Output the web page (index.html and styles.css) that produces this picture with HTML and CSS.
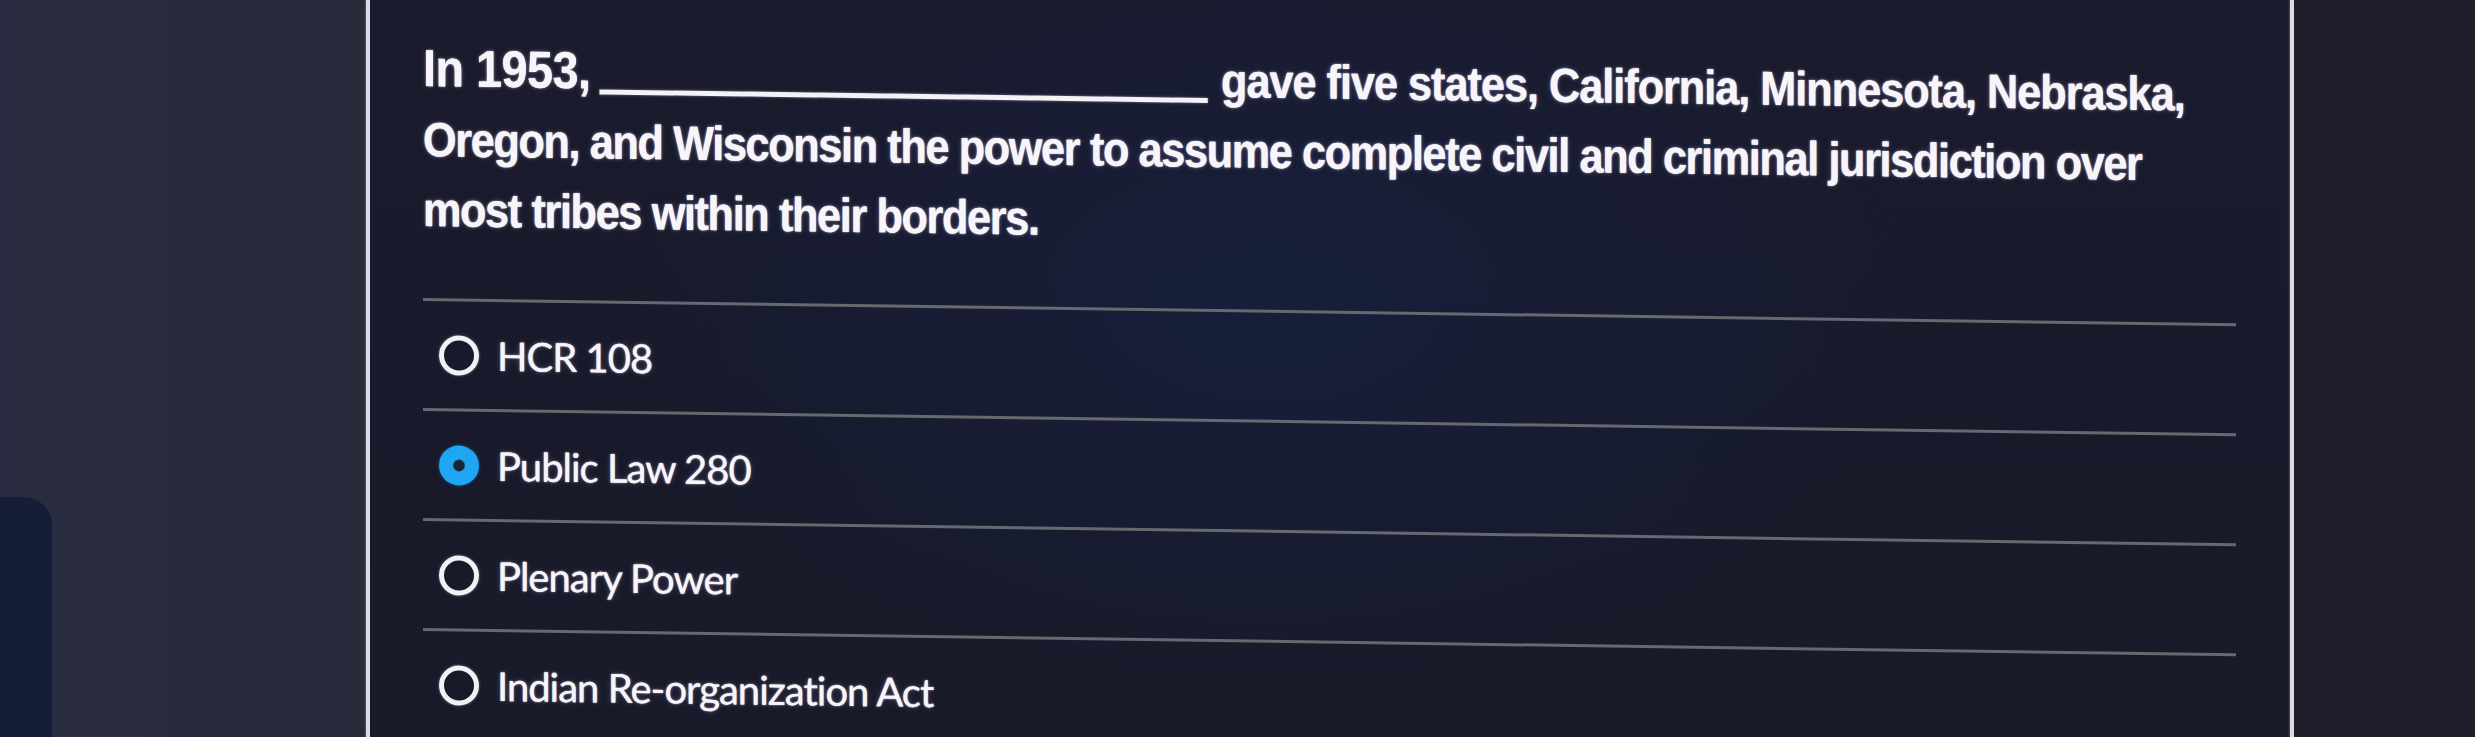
FILE: index.html
```html
<!DOCTYPE html>
<html lang="en">
<head>
<meta charset="utf-8">
<title>Quiz question</title>
<link rel="stylesheet" href="styles.css">
</head>
<body>
<div class="screen">
  <aside class="side-left">
    <div class="side-tab"></div>
  </aside>
  <div class="divider"></div>
  <main class="panel">
    <div class="quiz">
      <p class="question"><span class="lead">In 1953,</span> <span class="blank"></span> <span class="loose">gave five states, California, Minnesota, Nebraska,</span><br>Oregon, and Wisconsin the power to assume complete civil and criminal jurisdiction over<br>most tribes within their borders.</p>
      <ul class="options">
        <li class="option"><span class="radio"></span><span class="label">HCR 108</span></li>
        <li class="option"><span class="radio checked"></span><span class="label">Public Law 280</span></li>
        <li class="option"><span class="radio"></span><span class="label">Plenary Power</span></li>
        <li class="option"><span class="radio"></span><span class="label">Indian Re-organization Act</span></li>
      </ul>
    </div>
  </main>
  <div class="divider"></div>
  <aside class="side-right"></aside>
</div>
</body>
</html>
```

FILE: styles.css
```css
html, body {
  margin: 0;
  padding: 0;
  background: #1c1c28;
}

.screen {
  display: flex;
  width: 2475px;
  height: 737px;
  overflow: hidden;
}

.side-left {
  width: 366px;
  flex: none;
  display: flex;
  flex-direction: column;
  justify-content: flex-end;
  background: linear-gradient(90deg, #2a2d41 0px, #2a2d40 120px, #27293b 200px, #28293a 366px);
}

.side-tab {
  width: 52px;
  height: 240px;
  background: #161e37;
  border-top-right-radius: 28px;
}

.divider {
  width: 4px;
  flex: none;
  background: #dcdce4;
  box-shadow: 0 0 3px rgba(220, 220, 240, 0.5);
}

.panel {
  width: 1920px;
  flex: none;
  box-sizing: border-box;
  padding: 35px 0 0 53px;
  background:
    radial-gradient(ellipse 650px 400px at 900px 300px, rgba(22, 32, 64, 0.75), rgba(22, 32, 64, 0) 100%),
    linear-gradient(180deg, #1a1b2c 0%, #181a2b 60%, #191a29 100%);
}

.side-right {
  flex: 1;
  background: #1f1e2b;
}

.quiz {
  width: 1813px;
  transform: skewY(0.8deg);
  transform-origin: 0 0;
}

.question {
  margin: 0 0 53px 0;
  font-family: "Liberation Sans", Arial, sans-serif;
  font-weight: 700;
  font-size: 48px;
  line-height: 70px;
  letter-spacing: -1.5px;
  white-space: nowrap;
  color: #f7f5f9;
  transform: scaleX(0.9);
  transform-origin: 0 0;
  text-shadow: 0 0 1px rgba(255, 255, 255, 0.9), 0 0 3px rgba(255, 255, 255, 0.4), 0 0 7px rgba(180, 170, 255, 0.2);
}

.lead {
  font-size: 52px;
  line-height: 50px;
  letter-spacing: -0.6px;
}

.loose {
  letter-spacing: -1.1px;
}

.blank {
  display: inline-block;
  width: 676px;
  height: 0;
  margin: 0 3px -6px -2px;
  border-bottom: 5px solid #f4f2f6;
  box-shadow: 0 0 3px rgba(255, 255, 255, 0.4);
}

.options {
  list-style: none;
  margin: 0;
  padding: 0;
}

.option {
  display: flex;
  align-items: center;
  gap: 18px;
  height: 107px;
  padding-left: 16px;
  border-top: 3px solid #67696f;
}

.radio {
  width: 40px;
  height: 40px;
  flex: none;
  box-sizing: border-box;
  border-radius: 50%;
  border: 5px solid #f2f2f6;
  box-shadow: 0 0 3px rgba(255, 255, 255, 0.4);
}

.radio.checked {
  border: 0;
  background: radial-gradient(circle, #1b2233 0 5px, #1ea6f4 6.5px);
  box-shadow: 0 0 3px rgba(30, 166, 244, 0.5);
}

.label {
  font-family: Lato, "Open Sans", sans-serif;
  font-weight: 400;
  font-size: 40px;
  letter-spacing: -1px;
  color: #f7f5f9;
  text-shadow: 0 0 1px rgba(255, 255, 255, 0.9), 0 0 3px rgba(255, 255, 255, 0.35), 0 0 7px rgba(180, 170, 255, 0.2);
}
```
